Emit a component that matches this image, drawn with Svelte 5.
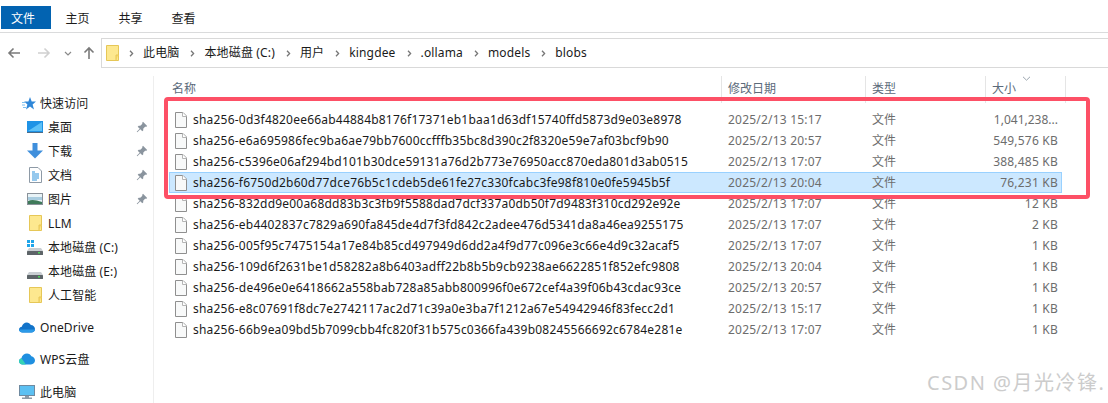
<script>
  const tabs = ['主页', '共享', '查看'];
  const crumbs = ['此电脑', '本地磁盘 (C:)', '用户', 'kingdee', '.ollama', 'models', 'blobs'];
  const files = [
    ['0d3f4820ee66ab44884b8176f17371eb1baa1d63df15740ffd5873d9e03e8978', '15:17', '1,041,238...'],
    ['e6a695986fec9ba6ae79bb7600ccfffb35bc8d390c2f8320e59e7af03bcf9b90', '20:57', '549,576 KB'],
    ['c5396e06af294bd101b30dce59131a76d2b773e76950acc870eda801d3ab0515', '17:07', '388,485 KB'],
    ['f6750d2b60d77dce76b5c1cdeb5de61fe27c330fcabc3fe98f810e0fe5945b5f', '20:04', '76,231 KB'],
    ['832dd9e00a68dd83b3c3fb9f5588dad7dcf337a0db50f7d9483f310cd292e92e', '17:07', '12 KB'],
    ['eb4402837c7829a690fa845de4d7f3fd842c2adee476d5341da8a46ea9255175', '17:07', '2 KB'],
    ['005f95c7475154a17e84b85cd497949d6dd2a4f9d77c096e3c66e4d9c32acaf5', '17:07', '1 KB'],
    ['109d6f2631be1d58282a8b6403adff22b8b5b9cb9238ae6622851f852efc9808', '20:04', '1 KB'],
    ['de496e0e6418662a558bab728a85abb800996f0e672cef4a39f06b43cdac93ce', '20:57', '1 KB'],
    ['e8c07691f8dc7e2742117ac2d71c39a0e3ba7f1212a67e54942946f83fecc2d1', '15:17', '1 KB'],
    ['66b9ea09bd5b7099cbb4fc820f31b575c0366fa439b08245566692c6784e281e', '17:07', '1 KB']
  ];
  const nav = [
    { label: '桌面', icon: 'desktop', pin: true },
    { label: '下载', icon: 'down', pin: true },
    { label: '文档', icon: 'doc', pin: true },
    { label: '图片', icon: 'pic', pin: true },
    { label: 'LLM', icon: 'folder' },
    { label: '本地磁盘 (C:)', icon: 'sys' },
    { label: '本地磁盘 (E:)', icon: 'drive' },
    { label: '人工智能', icon: 'folder' }
  ];
</script>

{#snippet folder(cls)}
  <svg class={cls} viewBox="0 0 13 16" width="13" height="16">
    <path d="M.5.5h12v15H.5z" fill="#fde88f" stroke="#e6c757"/>
    <path d="M10 15.500V10h2.500" fill="#fbd96b" stroke="#e6c757"/>
  </svg>
{/snippet}

{#snippet pin()}
  <svg class="pin" viewBox="0 0 12 12" width="12" height="12">
    <path d="M7 .8l4.200 4.200-1.200.9-.7-.3-2.100 2.100.1 1.600-1 1-2-2-3 3-.6-.6 3-3-2-2 1-1 1.600.1 2.100-2.100-.3-.7z" fill="#8a949e"/>
  </svg>
{/snippet}

{#snippet navIcon(name)}
  {#if name === 'desktop'}
    <svg viewBox="0 0 16 12" width="16" height="12" class="ni">
      <rect x="0" y="0" width="16" height="11" fill="#1f93e6"/>
      <path d="M1 10L15 1v9z" fill="#5dc1f7"/>
      <path d="M0 11h16v1H0z" fill="#4a6b88"/>
    </svg>
  {:else if name === 'down'}
    <svg viewBox="0 0 16 16" width="16" height="16" class="ni">
      <path d="M5.500 0h5v7.500H16L8 15.500 0 7.500h5.500z" fill="#3f8fdc"/>
    </svg>
  {:else if name === 'doc'}
    <svg viewBox="0 0 13 16" width="13" height="16" class="ni doc">
      <path d="M.5.5h8.500l3.500 3.500v11.500H.5z" fill="#fff" stroke="#8e9aa6"/>
      <path d="M3 5h3M3 7h7M3 9h7M3 11h7M3 13h5" stroke="#2f93dc"/>
    </svg>
  {:else if name === 'pic'}
    <svg viewBox="0 0 16 12" width="16" height="12" class="ni">
      <rect x=".5" y=".5" width="15" height="11" fill="#e8f3f7" stroke="#8a929a"/>
      <path d="M1 4h14v3H1z" fill="#a9cde0"/>
      <path d="M1 11V8c4-2 8-1 14 1v2z" fill="#3f7a5a"/>
    </svg>
  {:else if name === 'folder'}
    {@render folder('ni fold')}
  {:else}
    <svg viewBox="0 0 16 15" width="16" height="15" class="ni">
      {#if name === 'sys'}
        <path d="M0 0h3v3H0zM4 0h3v3H4zM0 4h3v3H0zM4 4h3v3H4z" fill="#1fa5ea"/>
      {/if}
      <path d="M2 8h12l2 3H0z" fill="#c9ced2"/>
      <rect x="0" y="11" width="16" height="4" rx=".5" fill="#5d6468"/>
      <rect x="11" y="12" width="2" height="1.500" fill="#4fd65a"/>
    </svg>
  {/if}
{/snippet}

<div class="win">
  <nav class="ribbon">
    <span class="tab active">文件</span>
    {#each tabs as t}<span class="tab">{t}</span>{/each}
  </nav>

  <div class="addr-row">
    <div class="arrows">
      <svg viewBox="0 0 14 12" width="14" height="12"><path d="M13 6H2M6.500 1.500L2 6l4.500 4.500" fill="none" stroke="#7a7a7a" stroke-width="1.600"/></svg>
      <svg viewBox="0 0 14 12" width="14" height="12"><path d="M1 6h11M7.500 1.500L12 6l-4.500 4.500" fill="none" stroke="#d0d0d0" stroke-width="1.600"/></svg>
      <svg class="chev" viewBox="0 0 8 5" width="8" height="5"><path d="M1 1l3 3 3-3" fill="none" stroke="#8a8a8a" stroke-width="1.200"/></svg>
      <svg viewBox="0 0 12 14" width="12" height="14"><path d="M6 13V2M1.500 6.500L6 2l4.500 4.500" fill="none" stroke="#7a7a7a" stroke-width="1.600"/></svg>
    </div>
    <div class="addr">
      {@render folder('addr-folder')}
      {#each crumbs as c}
        <svg class="sep" viewBox="0 0 5 7" width="5" height="7"><path d="M1 .8L3.600 3.500 1 6.200" fill="none" stroke="#777" stroke-width="1.300"/></svg>
        <span class="crumb">{c}</span>
      {/each}
    </div>
  </div>

  <div class="body">
    <aside class="side">
      <div class="nav-head">
        <svg viewBox="0 0 14 13" width="14" height="13" class="hi"><path d="M8 0l1.700 4.500H14l-3.400 3 1.400 5-4-3-4 3 1.400-5L2.200 4.500h4.200z" fill="#2f87d8"/><path d="M0 5.500h3M0 8h3M1 10.500h3" stroke="#7fc0ee"/></svg>
        <span class="nav-label">快速访问</span>
      </div>
      {#each nav as n}
        <div class="nav-item">
          <span class="ni-box">{@render navIcon(n.icon)}</span>
          <span class="nav-label">{n.label}</span>
          {#if n.pin}{@render pin()}{/if}
        </div>
      {/each}
      <div class="nav-head gap8">
        <svg viewBox="0 0 16 11" width="16" height="11" class="hi wide"><path d="M3.500 10.500C1.500 10.500 0 9.300 0 7.600c0-1.500 1.200-2.700 2.800-2.800C3.400 2.300 5.400.6 7.800.6c1.700 0 3.200.9 4 2.400 2.300.1 4.200 1.900 4.200 4 0 2-1.600 3.500-3.700 3.500z" fill="#1273c9"/><path d="M3.500 10.500C1.500 10.500 0 9.300 0 7.600h16c0 1.600-1.600 2.900-3.700 2.900z" fill="#2c9ae8"/></svg>
        <span class="nav-label">OneDrive</span>
      </div>
      <div class="nav-head gap8">
        <svg viewBox="0 0 16 12" width="16" height="12" class="hi wide"><path d="M3.500 11.500C1.500 11.500 0 10 0 8.200c0-1.400 1-2.600 2.400-2.900C3 2.500 5.400.5 8 .5c2 0 3.700 1.100 4.400 2.800 2 .5 3.600 2.300 3.600 4.300 0 2.200-1.800 3.900-4 3.900z" fill="#1f8fe0"/><path d="M3.500 11.500C1.500 11.500 0 10 0 8.200c0-1.400 1-2.600 2.400-2.900 1.500 1.800 3.200 4.200 4.400 6.200z" fill="#35d3b5"/></svg>
        <span class="nav-label">WPS云盘</span>
      </div>
      <div class="nav-head gap9">
        <svg viewBox="0 0 16 14" width="16" height="14" class="hi wide"><rect x=".5" y=".5" width="15" height="10" fill="#5cc0f2" stroke="#6f8aa0"/><path d="M6 11h4v1.500H6zM3 12.500h10V14H3z" fill="#8d9aa6"/></svg>
        <span class="nav-label">此电脑</span>
      </div>
    </aside>

    <main class="list">
      <div class="head">
        <span class="h-name">名称</span>
        <span class="h-date">修改日期</span>
        <span class="h-type">类型</span>
        <span class="h-size">大小
          <svg class="sort" viewBox="0 0 9 5" width="9" height="5"><path d="M1 .8l3.500 3.400L8 .8" fill="none" stroke="#9aa4ae"/></svg>
        </span>
        <span class="h-end"></span>
      </div>
      <div class="rows">
        {#each files as f, i}
          <div class="row" class:sel={i === 3}>
            <svg class="file" viewBox="0 0 12 16" width="12" height="16">
              <path d="M.5.5h7.500l3.500 3.500v11.500H.5z" fill="#f8f9f9" stroke="#8f8f8f"/>
              <path d="M7.500.5v4h4" fill="#fff" stroke="#b5b5b5"/>
            </svg>
            <span class="name">sha256-{f[0]}</span>
            <span class="date">2025/2/13 {f[1]}</span>
            <span class="type">文件</span>
            <span class="size" class:clipped={f[2].endsWith('...')}>{f[2]}</span>
          </div>
        {/each}
      </div>
    </main>
  </div>

  <div class="mark"></div>
  <div class="wm">CSDN @月光冷锋.</div>
</div>

<style>
  :global(body) { margin: 0; background: #fff; }
  .win {
    position: relative;
    width: 1108px;
    height: 403px;
    overflow: hidden;
    background: #fff;
    color: #1a1a1a;
    font: 12px/16px "Noto Sans", "Noto Sans CJK SC", sans-serif;
  }
  .ribbon {
    display: flex;
    height: 33px;
    box-sizing: border-box;
    padding: 6px 0 0 1px;
    border-bottom: 1px solid #dadbdc;
    margin-bottom: 5px;
  }
  .tab {
    width: 53px;
    height: 23px;
    line-height: 25px;
    text-align: center;
  }
  .tab.active {
    width: 50px;
    box-sizing: border-box;
    padding-left: 10px;
    text-align: left;
    background: #0263b1;
    color: #fff;
  }
  .addr-row {
    display: flex;
    height: 30px;
    margin-bottom: 8px;
  }
  .arrows {
    width: 101px;
    flex: none;
    display: flex;
    align-items: center;
    padding-left: 7px;
    box-sizing: border-box;
  }
  .arrows svg:nth-child(1) { margin-right: 16px; }
  .arrows svg:nth-child(2) { margin-right: 13px; }
  .arrows .chev { margin-right: 11px; }
  .addr {
    flex: 1;
    display: flex;
    align-items: center;
    border: 1px solid #d9d9d9;
    border-right: 0;
    padding-left: 4px;
  }
  :global(.addr-folder) { margin-right: 10px; flex: none; }
  .sep { margin-right: 9px; flex: none; }
  .crumb { margin-right: 11px; letter-spacing: .15px; }
  .body {
    display: flex;
    height: 327px;
  }
  .side {
    width: 154px;
    flex: none;
    box-sizing: border-box;
    border-right: 1px solid #eeeeee;
    padding-top: 15px;
  }
  .nav-head {
    display: flex;
    align-items: center;
    height: 24px;
    padding-left: 22px;
  }
  .nav-head .hi { margin-right: 4px; flex: none; }
  .nav-head .hi.wide { margin-left: -3px; margin-right: 5px; }
  .gap8 { margin-top: 8px; }
  .gap9 { margin-top: 9px; }
  .nav-item {
    display: flex;
    align-items: center;
    height: 24px;
    padding-left: 27px;
  }
  .ni-box {
    width: 21px;
    flex: none;
    display: flex;
    align-items: center;
  }
  :global(.ni) { display: block; }
  :global(.doc), :global(.fold) { margin-left: 2px; }
  .nav-label { flex: 1; white-space: nowrap; letter-spacing: .1px; padding-top: 2px; }
  :global(.pin) { margin-right: 5px; flex: none; }
  .list { flex: 1; min-width: 0; }
  .head {
    display: flex;
    height: 27px;
    color: #5b6a7a;
  }
  .head span {
    box-sizing: border-box;
    padding-top: 5px;
    line-height: 16px;
    border-right: 1px solid #e5e5e5;
    position: relative;
  }
  .h-name { width: 568px; padding-left: 18px; }
  .h-date { width: 144px; padding-left: 6px; }
  .h-type { width: 120px; padding-left: 6px; }
  .h-size { width: 80px; padding-left: 6px; }
  .head .h-end { border: 0; }
  .sort { position: absolute; left: 36px; top: 0; }
  .rows { padding-top: 6px; padding-left: 15px; }
  .row {
    display: flex;
    align-items: center;
    width: 893px;
    height: 21px;
    box-sizing: border-box;
    border: 1px solid transparent;
    padding-left: 5px;
    white-space: nowrap;
  }
  .row.sel { background: #cce8ff; border-color: #99d1ff; }
  .file { flex: none; margin-right: 6px; }
  .name { width: 535px; flex: none; overflow: hidden; letter-spacing: .21px; }
  .date { width: 144px; flex: none; color: #6d6d6d; letter-spacing: .21px; }
  .type { width: 90px; flex: none; color: #6d6d6d; }
  .size { width: 96px; flex: none; text-align: right; color: #6d6d6d; letter-spacing: .21px; }
  .size.clipped { letter-spacing: 0; }
  .mark {
    position: absolute;
    left: 164px;
    top: 97px;
    width: 926px;
    height: 102px;
    box-sizing: border-box;
    border: 4px solid #fd5066;
    border-radius: 4px;
    pointer-events: none;
  }
  .wm {
    position: absolute;
    left: 927px;
    top: 370px;
    font-size: 20px;
    line-height: 26px;
    letter-spacing: 1.5px;
    color: #cccccc;
    white-space: nowrap;
  }
</style>
